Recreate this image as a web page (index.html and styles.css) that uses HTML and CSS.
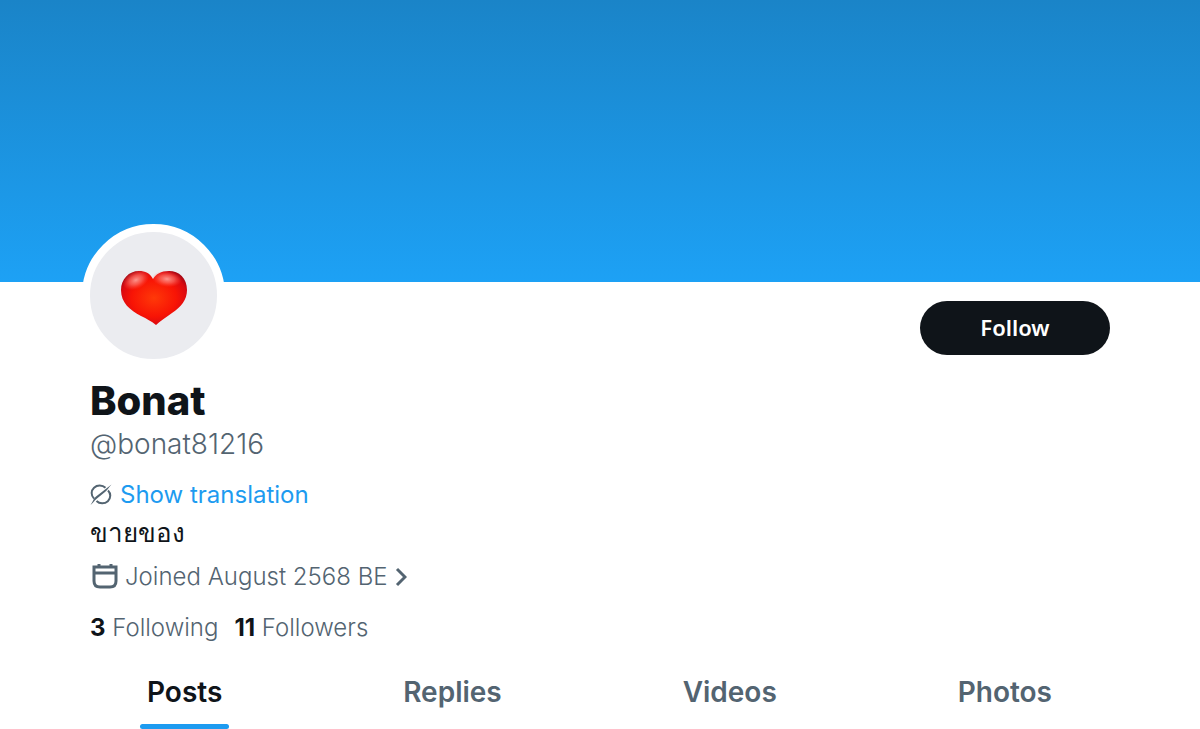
FILE: index.html
```html
<!DOCTYPE html>
<html lang="en">
<head>
    <meta charset="UTF-8">
    <meta name="viewport" content="width=device-width, initial-scale=1.0">
    <title>Bonat (@bonat81216)</title>
    <link rel="stylesheet" href="styles.css">
</head>
<body>
    <div class="banner"></div>

    <main class="profile">
        <div class="top">
            <div class="avatar">
                <svg class="heart" viewBox="0 0 66 56" role="img" aria-label="Red heart">
                    <defs>
                        <radialGradient id="fill" cx="50%" cy="50%" r="62%">
                            <stop offset="0" stop-color="#ff3908"/>
                            <stop offset="0.55" stop-color="#f81405"/>
                            <stop offset="0.8" stop-color="#dc0a10"/>
                            <stop offset="1" stop-color="#8c0717"/>
                        </radialGradient>
                        <radialGradient id="shine">
                            <stop offset="0" stop-color="#ffa59c" stop-opacity="0.9"/>
                            <stop offset="0.5" stop-color="#ff7a6e" stop-opacity="0.6"/>
                            <stop offset="1" stop-color="#ff5040" stop-opacity="0"/>
                        </radialGradient>
                    </defs>
                    <path fill="url(#fill)" d="M32 9C29 3 24 1 18 1C8 1 0 9 0 20C0 33 9 40 20 46C26 49 30 51 35 55C39 51 44 48 51 43C60 37 66 30 66 20C66 8 58 1 48 1C40 1 35 4 32 9Z"/>
                    <ellipse cx="15" cy="10" rx="14" ry="9" fill="url(#shine)" transform="rotate(-25 15 10)"/>
                    <ellipse cx="46" cy="9" rx="15" ry="8" fill="url(#shine)" transform="rotate(6 46 9)"/>
                </svg>
            </div>
            <button class="follow" type="button">Follow</button>
        </div>

        <h1 class="name">Bonat</h1>
        <p class="handle">@bonat81216</p>

        <div class="translate">
            <svg class="grok" viewBox="0 0 22 22" aria-hidden="true">
                <path d="M15.500 3.800A8 7.500 0 0 0 4 14.500"/>
                <path d="M6.500 17A8 7.500 0 0 0 18 6.500"/>
                <path class="slash" d="M0.500 21C3.500 17 3 15 6 12.500L21.500 0.500C18.500 3.500 17.500 6 15 8L7 14.500C4 17 3 19 0.500 21Z"/>
            </svg>
            <a href="#">Show translation</a>
        </div>
        <p class="bio" lang="th">ขายของ</p>

        <a class="joined" href="#">
            <svg class="calendar" viewBox="0 0 26 26" aria-hidden="true">
                <path d="M2 3H24V17Q24 23 18 23H8Q2 23 2 17ZM2 9H24M7 0V3M19 0V3"/>
            </svg>
            <span>Joined August 2568 BE</span>
            <svg class="chevron" viewBox="0 0 12 20" aria-hidden="true">
                <path d="M2 2L10 10L2 18"/>
            </svg>
        </a>

        <div class="counts">
            <a href="#"><b>3</b> Following</a>
            <a href="#"><b>11</b> Followers</a>
        </div>
    </main>

    <nav class="tabs">
        <a class="tab active" href="#">Posts</a>
        <a class="tab" href="#">Replies</a>
        <a class="tab" href="#">Videos</a>
        <a class="tab" href="#">Photos</a>
    </nav>
</body>
</html>
```
FILE: styles.css
```css
* {
    box-sizing: border-box;
}
body {
    margin: 0;
    background: #fff;
    color: #0f1419;
    font-family: Inter, "Liberation Sans", sans-serif;
    font-size: 24px;
}
h1, p {
    margin: 0;
}
a {
    color: inherit;
    text-decoration: none;
}
.banner {
    height: 282px;
    background: linear-gradient(#1a84c8, #1da1f5);
}
.profile {
    padding: 0 90px;
    color: #536471;
}
.top {
    display: flex;
    justify-content: space-between;
    align-items: flex-start;
}
.avatar {
    display: flex;
    justify-content: center;
    align-items: center;
    width: 143px;
    height: 143px;
    margin: -58px 0 0 -8px;
    padding-top: 4px;
    border: 8px solid #fff;
    border-radius: 50%;
    background: #ebecf0;
}
.heart {
    width: 66px;
    height: 56px;
}
.follow {
    width: 190px;
    height: 54px;
    margin-top: 19px;
    padding-bottom: 3px;
    border: none;
    border-radius: 27px;
    background: #0f1419;
    color: #fff;
    font-family: "Noto Sans", sans-serif;
    font-size: 22px;
    font-weight: 600;
    cursor: pointer;
}
.name {
    margin-top: 10px;
    color: #0f1419;
    font-size: 40px;
    font-weight: 800;
    line-height: 48px;
}
.handle {
    font-size: 28px;
    font-weight: 350;
    line-height: 38px;
}
.translate {
    display: flex;
    align-items: center;
    gap: 8px;
    margin-top: 12px;
    color: #1d9bf0;
    line-height: 40px;
}
.grok {
    width: 22px;
    height: 22px;
    fill: none;
    stroke: #536471;
    stroke-width: 2;
}
.grok .slash {
    fill: #536471;
    stroke: none;
}
.bio {
    color: #0f1419;
    font-size: 26px;
    line-height: 36px;
}
.joined {
    display: flex;
    align-items: center;
    gap: 7px;
    margin-top: 4px;
    padding-left: 2px;
    font-weight: 350;
    line-height: 44px;
}
.calendar {
    width: 26px;
    height: 26px;
}
.chevron {
    width: 12px;
    height: 20px;
}
.calendar, .chevron {
    fill: none;
    stroke: #536471;
    stroke-width: 3;
}
.counts {
    display: flex;
    gap: 16px;
    margin-top: 8px;
    font-weight: 350;
    line-height: 42px;
}
.counts b {
    color: #0f1419;
    font-weight: 700;
}
.tabs {
    display: flex;
    justify-content: space-between;
    padding: 12px 141px 0 140px;
}
.tab {
    padding: 12px 7px 0;
    color: #536471;
    font-size: 28px;
    font-weight: 600;
    line-height: 38px;
}
.tab::after {
    content: "";
    display: block;
    height: 5px;
    margin: 13px -7px 0;
    border-radius: 3px;
}
.tab.active {
    color: #0f1419;
}
.tab.active::after {
    background: #1d9bf0;
}
```
